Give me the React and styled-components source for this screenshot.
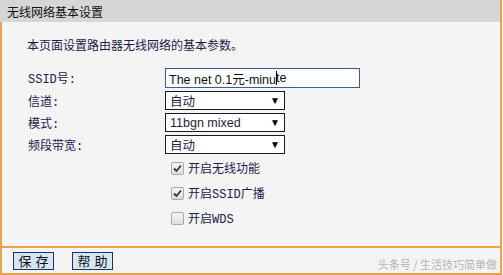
import React from 'react'
import styled, { createGlobalStyle } from 'styled-components'

const GlobalStyle = createGlobalStyle`
  body {
    margin: 0;
    background: #ffffff;
    font-family: "Noto Sans CJK SC", sans-serif;
  }
`

const Frame = styled.div`
  width: 503px;
  height: 275px;
  display: flex;
  flex-direction: column;
  box-sizing: border-box;
  background: #f4f4f4;
`

const TitleBar = styled.div`
  height: 22px;
  background: #d6d6d6;
  border-right: 2px solid #e9a34a;
  margin-right: 1px;
  padding-left: 7px;
  display: flex;
  align-items: center;
  font-size: 12px;
  color: #111111;
`

const Body = styled.div`
  height: 226px;
  box-sizing: border-box;
  border-left: 2px solid #e9a34a;
  border-right: 2px solid #e9a34a;
  border-bottom: 2px solid #e9a34a;
  margin-right: 1px;
  padding: 13px 0 0 25px;
  color: #1c1c4a;
`

const Intro = styled.div`
  font-size: 12px;
  height: 20px;
  line-height: 20px;
  margin-bottom: 13px;
`

const Form = styled.div`
  display: grid;
  grid-template-columns: 138px auto;
  row-gap: 3px;
  align-items: center;
  justify-items: start;
`

const Label = styled.div`
  font-family: "Liberation Mono", "Noto Sans CJK SC", monospace;
  font-size: 12px;
  padding-left: 1px;
`

const TextBox = styled.div`
  width: 195px;
  height: 20px;
  box-sizing: border-box;
  border: 1px solid #3d5c8f;
  background: #ffffff;
  display: flex;
  align-items: center;
  padding-left: 3px;
  font-family: "Liberation Sans", "Noto Sans CJK SC", sans-serif;
  font-size: 12.5px;
  color: #111111;
`

const Caret = styled.span`
  display: inline-block;
  width: 1px;
  height: 14px;
  background: #000000;
  margin: 0 -1px 0 0;
  vertical-align: middle;
`

const Select = styled.div`
  width: 120px;
  height: 19px;
  box-sizing: border-box;
  border: 1px solid #1a1a1a;
  background: #ffffff;
  display: flex;
  align-items: center;
  justify-content: space-between;
  padding: 0 4px 0 4px;
  font-family: "Liberation Sans", "Noto Sans CJK SC", sans-serif;
  font-size: 12.5px;
  color: #1c1c3c;
`

const Arrow = styled.span`
  font-size: 10px;
  color: #000000;
`

const Checks = styled.div`
  display: flex;
  flex-direction: column;
  gap: 11px;
  padding: 7px 0 0 144px;
`

const CheckRow = styled.label`
  display: flex;
  align-items: center;
  gap: 4px;
  height: 14px;
  font-family: "Liberation Mono", "Noto Sans CJK SC", monospace;
  font-size: 12px;
`

const Box = styled.span`
  width: 11px;
  height: 11px;
  border: 1px solid #a8a8a8;
  border-radius: 2px;
  background: linear-gradient(#f6f6f6, #dcdcdc);
  display: flex;
  align-items: center;
  justify-content: center;
`

const Footer = styled.div`
  height: 27px;
  box-sizing: border-box;
  border-left: 2px solid #e9a34a;
  border-right: 2px solid #e9a34a;
  border-bottom: 2px solid #e9a34a;
  margin-right: 1px;
  display: flex;
  align-items: center;
  padding-left: 11px;
  gap: 18px;
`

const Button = styled.div`
  width: 41px;
  height: 18px;
  box-sizing: border-box;
  border: 1px solid #1f3550;
  background: #d6e6f8;
  display: flex;
  align-items: center;
  justify-content: center;
  font-size: 13px;
  letter-spacing: 4px;
  padding-left: 4px;
  color: #111111;
`

const Watermark = styled.div`
  margin-left: auto;
  padding-right: 3px;
  padding-top: 6px;
  font-size: 11px;
  color: #b5b5b5;
`

const Tick = () => (
  <svg width="9" height="9" viewBox="0 0 9 9">
    <path d="M1 4.5 L3.5 7 L8 1.5" fill="none" stroke="#333" strokeWidth="1.8" />
  </svg>
)

const Check = ({ checked, children }) => (
  <CheckRow>
    <Box>{checked && <Tick />}</Box>
    {children}
  </CheckRow>
)

export default function App() {
  return (
    <>
      <GlobalStyle />
      <Frame>
        <TitleBar>无线网络基本设置</TitleBar>
        <Body>
          <Intro>本页面设置路由器无线网络的基本参数。</Intro>
          <Form>
            <Label>SSID号:</Label>
            <TextBox>
              The net 0.1元-minu<Caret />te
            </TextBox>
            <Label>信道:</Label>
            <Select>
              自动<Arrow>▼</Arrow>
            </Select>
            <Label>模式:</Label>
            <Select>
              11bgn mixed<Arrow>▼</Arrow>
            </Select>
            <Label>频段带宽:</Label>
            <Select>
              自动<Arrow>▼</Arrow>
            </Select>
          </Form>
          <Checks>
            <Check checked>开启无线功能</Check>
            <Check checked>开启SSID广播</Check>
            <Check>开启WDS</Check>
          </Checks>
        </Body>
        <Footer>
          <Button>保存</Button>
          <Button>帮助</Button>
          <Watermark>头条号 / 生活技巧简单做</Watermark>
        </Footer>
      </Frame>
    </>
  )
}
